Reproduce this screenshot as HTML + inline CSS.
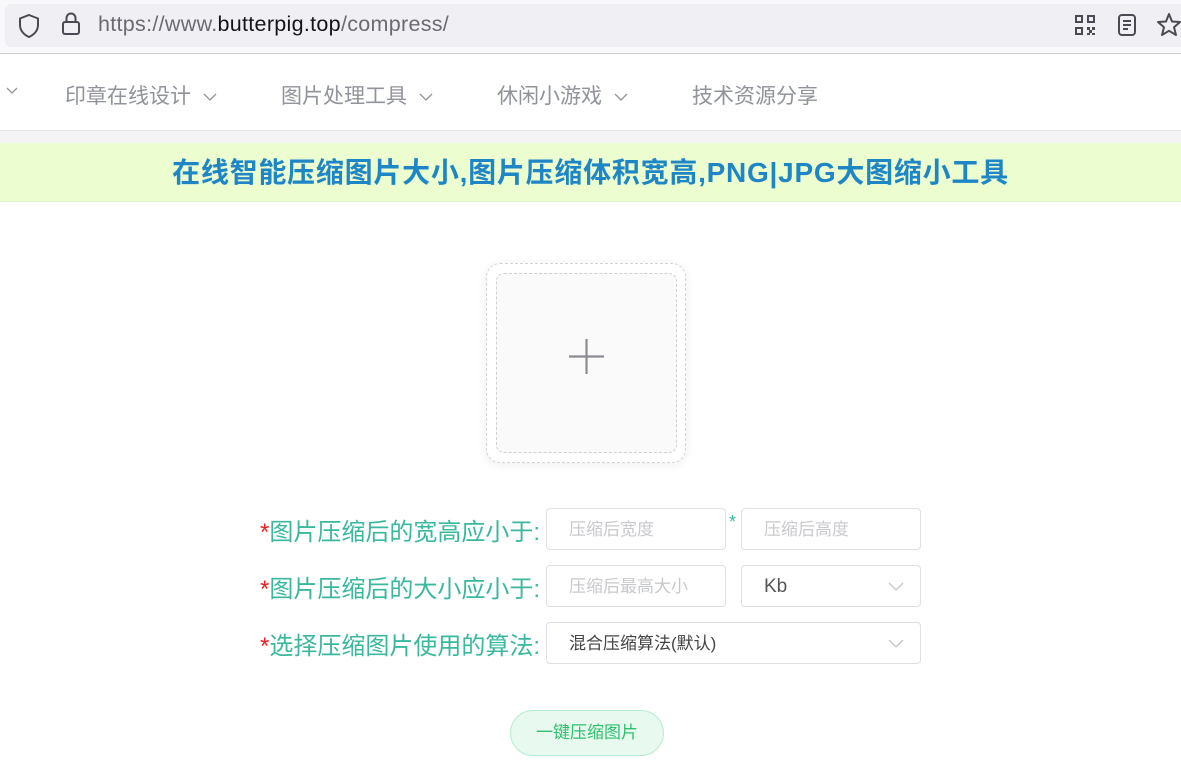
<!DOCTYPE html>
<html><head><meta charset="utf-8"><style>
*{margin:0;padding:0;box-sizing:border-box}
body{width:1181px;height:760px;overflow:hidden;background:#fff;font-family:"Liberation Sans","Noto Sans CJK SC",sans-serif;position:relative}
.abs{position:absolute}
.bar{left:0;top:0;width:1181px;height:54px;background:#f9f9fb;border-bottom:1px solid #cfcfd8}
.url{left:5px;top:4px;width:1190px;height:43px;background:#f0f0f4;border-radius:6px}
.urltxt{left:98px;top:12px;font-size:21.5px;color:#6a6a72;letter-spacing:0.3px}
.urltxt b{font-weight:normal;color:#15141a}
.nav{left:0;top:55px;width:1181px;height:76px;background:#fff;border-bottom:1px solid #e6e6ea}
.nav span{position:absolute;top:25px;font-size:21px;color:#909399}
.nav svg{margin-left:12px;vertical-align:middle}
.gray{left:0;top:131px;width:1181px;height:12px;background:#f4f4f6}
.banner{left:0;top:143px;width:1181px;height:59px;background:#ecfdd0;border-bottom:1px solid #e0f0c8;text-align:center;font-weight:bold;font-size:28px;color:#1f86c6;line-height:60px;letter-spacing:0.75px}
.outer{left:486px;top:263px;width:200px;height:200px;border:1px dashed #d4d4d4;border-radius:14px;box-shadow:0 2px 10px rgba(0,0,0,.07);background:#fff}
.inner{left:496px;top:273px;width:181px;height:180px;border:1px dashed #d0d0d0;border-radius:8px;background:#fafafa}
.lbl{font-size:24px;color:#3ab89e;right:641px;white-space:nowrap}
.lbl i{font-style:normal;color:#f02020}
.inp{height:42px;border:1px solid #dcdfe6;border-radius:4px;background:#fff;font-size:17px;color:#c8c9cc;padding-left:22px;line-height:42px}
.chev{position:absolute;right:16px;top:13px}
.btn{left:510px;top:710px;width:154px;height:46px;border-radius:23px;background:#e8f9ef;border:1px solid #b8ecd0;color:#2fbf70;font-size:17px;text-align:center;line-height:44px}
</style></head><body>
<div class="abs bar"></div>
<div class="abs url"></div>
<svg class="abs" style="left:17px;top:13px" width="24" height="26" viewBox="0 0 24 26"><path d="M12 2 L21 5.5 V12 C21 18 16.5 22 12 24 C7.5 22 3 18 3 12 V5.5 Z" fill="none" stroke="#4a4a52" stroke-width="2"/></svg>
<svg class="abs" style="left:60px;top:11px" width="22" height="26" viewBox="0 0 22 26"><rect x="3" y="11" width="16" height="12" rx="2" fill="none" stroke="#4a4a52" stroke-width="2"/><path d="M6.5 11 V7 a4.5 4.5 0 0 1 9 0 V11" fill="none" stroke="#4a4a52" stroke-width="2"/></svg>
<div class="abs urltxt">https://www.<b>butterpig.top</b>/compress/</div>
<svg class="abs" style="left:1074px;top:14px" width="22" height="22" viewBox="0 0 22 22"><g fill="#4a4a52"><rect x="1" y="1" width="8" height="8"/><rect x="13" y="1" width="8" height="8"/><rect x="1" y="13" width="8" height="8"/><rect x="13" y="13" width="3" height="3"/><rect x="18" y="13" width="3" height="3"/><rect x="15" y="16" width="3" height="3"/><rect x="13" y="19" width="3" height="2"/><rect x="18" y="19" width="3" height="2"/></g><g fill="#f0f0f4"><rect x="3" y="3" width="4" height="4"/><rect x="15" y="3" width="4" height="4"/><rect x="3" y="15" width="4" height="4"/></g></svg>
<svg class="abs" style="left:1117px;top:13px" width="20" height="24" viewBox="0 0 20 24"><rect x="2" y="2" width="16" height="20" rx="3" fill="none" stroke="#4a4a52" stroke-width="2"/><path d="M6 8h8M6 12h8M6 16h5" stroke="#4a4a52" stroke-width="2"/></svg>
<svg class="abs" style="left:1156px;top:12px" width="26" height="26" viewBox="0 0 26 26"><path d="M13 2 L16 9.5 L24 10 L18 15.2 L20 23 L13 18.8 L6 23 L8 15.2 L2 10 L10 9.5 Z" fill="none" stroke="#4a4a52" stroke-width="2" stroke-linejoin="round"/></svg>
<div class="abs nav">
<svg class="abs" style="left:-6px;top:32px" width="12" height="8"><path d="M1 1 L6 6 L11 1" fill="none" stroke="#909399" stroke-width="1.3"/></svg>
<span style="left:65px">印章在线设计<svg width="14" height="8"><path d="M1 1 L7 7 L13 1" fill="none" stroke="#909399" stroke-width="1.3"/></svg></span>
<span style="left:281px">图片处理工具<svg width="14" height="8"><path d="M1 1 L7 7 L13 1" fill="none" stroke="#909399" stroke-width="1.3"/></svg></span>
<span style="left:497px">休闲小游戏<svg width="14" height="8"><path d="M1 1 L7 7 L13 1" fill="none" stroke="#909399" stroke-width="1.3"/></svg></span>
<span style="left:692px">技术资源分享</span>
</div>
<div class="abs gray"></div>
<div class="abs banner">在线智能压缩图片大小,图片压缩体积宽高,PNG|JPG大图缩小工具</div>
<div class="abs outer"></div>
<div class="abs inner"></div>
<svg class="abs" style="left:569px;top:339px" width="35" height="35"><path d="M17.5 0V35M0 17.5H35" stroke="#8a8c92" stroke-width="2.2"/></svg>
<div class="abs lbl" style="top:512px"><i>*</i>图片压缩后的宽高应小于:</div>
<div class="abs lbl" style="top:569px"><i>*</i>图片压缩后的大小应小于:</div>
<div class="abs lbl" style="top:626px"><i>*</i>选择压缩图片使用的算法:</div>
<div class="abs inp" style="left:546px;top:508px;width:180px">压缩后宽度</div>
<div class="abs" style="left:729px;top:512px;font-size:18px;color:#3ab89e">*</div>
<div class="abs inp" style="left:741px;top:508px;width:180px">压缩后高度</div>
<div class="abs inp" style="left:546px;top:565px;width:180px">压缩后最高大小</div>
<div class="abs inp" style="left:741px;top:565px;width:180px;color:#555;font-size:19px">Kb<svg class="chev" width="16" height="14"><path d="M1 4 L8 11 L15 4" fill="none" stroke="#c0c4cc" stroke-width="1.3"/></svg></div>
<div class="abs inp" style="left:546px;top:622px;width:375px;color:#444">混合压缩算法(默认)<svg class="chev" width="16" height="14"><path d="M1 4 L8 11 L15 4" fill="none" stroke="#c0c4cc" stroke-width="1.3"/></svg></div>
<div class="abs btn">一键压缩图片</div>
</body></html>
